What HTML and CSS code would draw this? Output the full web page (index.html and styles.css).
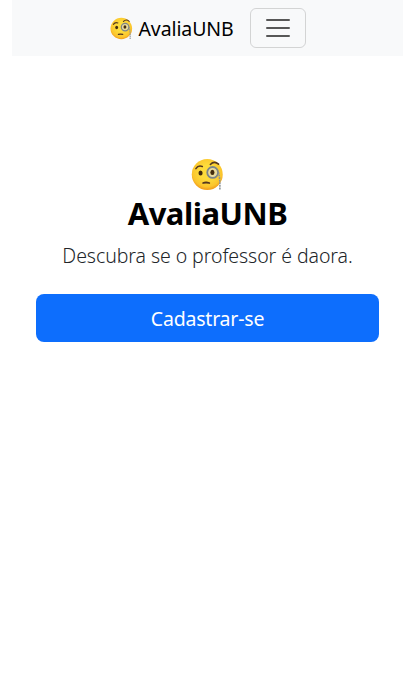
FILE: index.html
```html
<!DOCTYPE html>
<html lang="pt-BR">
<head>
<meta charset="utf-8">
<title>AvaliaUNB</title>
<link rel="stylesheet" href="styles.css">
</head>
<body>
<svg class="defs" width="0" height="0" aria-hidden="true">
  <defs>
    <radialGradient id="skin" cx=".5" cy=".42" r=".56">
      <stop offset=".4" stop-color="#fddc3b"/>
      <stop offset=".85" stop-color="#fbc52c"/>
      <stop offset="1" stop-color="#f3a21d"/>
    </radialGradient>
    <symbol id="monocle" viewBox="0 0 128 128">
      <circle cx="63" cy="64" r="60" fill="url(#skin)"/>
      <path d="M19 41Q28 27 44 33M75 25Q90 9 107 24" fill="none" stroke="#533720" stroke-width="6" stroke-linecap="round"/>
      <ellipse cx="37" cy="58" rx="8" ry="10" fill="#422b0d"/>
      <circle cx="84" cy="56" r="21" fill="#eadb9b" stroke="#7c8589" stroke-width="7"/>
      <ellipse cx="83" cy="56" rx="8" ry="10" fill="#422b0d"/>
      <path d="M47 97Q58 93 71 97" fill="none" stroke="#533720" stroke-width="7" stroke-linecap="round"/>
      <path d="M107 56Q113 78 112 125" fill="none" stroke="#8a9296" stroke-width="6" stroke-dasharray="7 3"/>
    </symbol>
  </defs>
</svg>
<nav class="navbar">
  <a class="brand"><svg class="brand-icon"><use href="#monocle"/></svg><span>AvaliaUNB</span></a>
  <button class="toggler" aria-label="Menu">
    <svg class="toggler-icon" viewBox="0 0 30 30"><path d="M4 7h22M4 15h22M4 23h22" fill="none" stroke="currentColor" stroke-width="2" stroke-linecap="round" stroke-miterlimit="10"/></svg>
  </button>
</nav>
<main class="hero">
  <svg class="hero-icon"><use href="#monocle"/></svg>
  <h1 class="title">AvaliaUNB</h1>
  <p class="lead">Descubra se o professor é daora.</p>
  <a class="signup">Cadastrar-se</a>
</main>
</body>
</html>
```
FILE: styles.css
```css
* { box-sizing: border-box; }
body {
  margin: 0;
  padding: 0 12px;
  background: #fff;
  color: #000;
  font-family: "Noto Sans", "Open Sans", sans-serif;
}
.defs { display: block; }
.navbar {
  display: flex;
  justify-content: center;
  align-items: center;
  gap: 16px;
  height: 56px;
  background: #f8f9fa;
}
.brand {
  display: flex;
  align-items: center;
  gap: 6px;
  padding-top: 2px;
  font-size: 19.5px;
  line-height: 30px;
}
.brand span { width: 95px; white-space: nowrap; letter-spacing: -0.1px; }
.brand-icon { width: 23px; height: 23px; margin-bottom: 1px; }
.toggler {
  display: flex;
  width: 56px;
  height: 40px;
  padding: 4px 12px;
  border: 1px solid rgba(0, 0, 0, .15);
  border-radius: 6px;
  background: none;
  color: rgba(0, 0, 0, .65);
}
.toggler-icon { width: 30px; height: 30px; }
.hero {
  display: flex;
  flex-direction: column;
  align-items: center;
  padding: 101.5px 24px 0;
}
.hero-icon { width: 33px; height: 33px; }
.title {
  margin: 3.5px 0 0;
  font-size: 31px;
  line-height: 39px;
  font-weight: 700;
  letter-spacing: -0.5px;
}
.lead {
  margin: 8px 0 0;
  font-size: 19.5px;
  line-height: 30px;
  font-weight: 300;
  letter-spacing: -0.07px;
  color: #212529;
  white-space: nowrap;
}
.signup {
  width: 343px;
  margin-top: 23px;
  padding: 10px 16px 8px;
  border-radius: 8px;
  background: #0d6efd;
  color: #fff;
  font-size: 19.5px;
  letter-spacing: -0.2px;
  line-height: 30px;
  text-align: center;
}
```
